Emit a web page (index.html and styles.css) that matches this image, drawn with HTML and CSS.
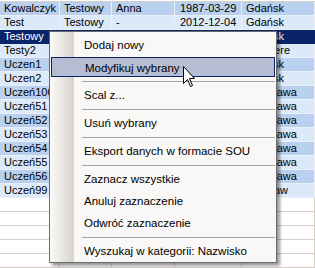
FILE: index.html
```html
<!DOCTYPE html>
<html lang="pl">
<head>
  <meta charset="UTF-8">
  <title>Lista osób</title>
  <link rel="stylesheet" href="styles.css">
</head>
<body>
  <div class="grid">
    <div class="row dark"><span>Kowalczyk</span><span>Testowy</span><span>Anna</span><span>1987-03-29</span><span>Gdańsk</span></div>
    <div class="row light"><span>Test</span><span>Testowy</span><span>-</span><span>2012-12-04</span><span>Gdańsk</span></div>
    <div class="row selected"><span>Testowy</span><span></span><span></span><span></span><span>Gdańsk</span></div>
    <div class="row light"><span>Testy2</span><span></span><span></span><span></span><span>Nowhere</span></div>
    <div class="row dark"><span>Uczen1</span><span></span><span></span><span></span><span>Gdańsk</span></div>
    <div class="row light"><span>Uczen2</span><span></span><span></span><span></span><span>Gdańsk</span></div>
    <div class="row dark"><span>Uczeń100</span><span></span><span></span><span></span><span>Warszawa</span></div>
    <div class="row light"><span>Uczeń51</span><span></span><span></span><span></span><span>Warszawa</span></div>
    <div class="row dark"><span>Uczeń52</span><span></span><span></span><span></span><span>Warszawa</span></div>
    <div class="row light"><span>Uczeń53</span><span></span><span></span><span></span><span>Warszawa</span></div>
    <div class="row dark"><span>Uczeń54</span><span></span><span></span><span></span><span>Warszawa</span></div>
    <div class="row light"><span>Uczeń55</span><span></span><span></span><span></span><span>Warszawa</span></div>
    <div class="row dark"><span>Uczeń56</span><span></span><span></span><span></span><span>Warszawa</span></div>
    <div class="row light"><span>Uczeń99</span><span></span><span></span><span></span><span>Wrocław</span></div>
    <div class="row"><span></span><span></span><span></span><span></span><span></span></div>
    <div class="row"><span></span><span></span><span></span><span></span><span></span></div>
    <div class="row"><span></span><span></span><span></span><span></span><span></span></div>
    <div class="row"><span></span><span></span><span></span><span></span><span></span></div>
    <div class="row"><span></span><span></span><span></span><span></span><span></span></div>
  </div>

  <ul class="context-menu">
    <li class="menu-item">Dodaj nowy</li>
    <li class="menu-item active">Modyfikuj wybrany</li>
    <li class="menu-sep"></li>
    <li class="menu-item">Scal z...</li>
    <li class="menu-sep"></li>
    <li class="menu-item">Usuń wybrany</li>
    <li class="menu-sep"></li>
    <li class="menu-item">Eksport danych w formacie SOU</li>
    <li class="menu-sep"></li>
    <li class="menu-item">Zaznacz wszystkie</li>
    <li class="menu-item">Anuluj zaznaczenie</li>
    <li class="menu-item">Odwróć zaznaczenie</li>
    <li class="menu-sep"></li>
    <li class="menu-item">Wyszukaj w kategorii: Nazwisko</li>
  </ul>

  <svg class="cursor" width="13" height="22" viewBox="0 0 13 22">
    <path d="M0.5 0.5 L0.5 17.5 L4.5 13.5 L7.5 20.5 L9.5 19.5 L6.5 12.5 L11.5 12.5 Z" fill="#fff" stroke="#000" stroke-width="1"/>
  </svg>
</body>
</html>
```

FILE: styles.css
```css
* {
  margin: 0;
  padding: 0;
  box-sizing: border-box;
}

body {
  font-family: "Liberation Sans", Arial, sans-serif;
  font-size: 11px;
  background: #fff;
  color: #000;
  width: 315px;
  height: 268px;
  overflow: hidden;
  position: relative;
}

/* data grid */
.grid {
  padding-top: 1px;
}

.grid .row:first-child {
  border-top: 1px solid #d4d0c8;
}

.row {
  display: grid;
  grid-template-columns: 60px 52px 63px 67px 1fr;
}

.row span {
  height: 14px;
  line-height: 13px;
  padding-left: 4px;
  border-right: 1px solid #d4d0c8;
  border-bottom: 1px solid #d4d0c8;
  white-space: nowrap;
  overflow: hidden;
}

.row span:nth-child(4) {
  padding-left: 5px;
}

.row.dark span {
  background: #b9d1ee;
  border-color: #eaf0f8;
}

.row.light span {
  background: #dce9f8;
  border-color: #eaf0f8;
}

.row.selected span {
  background: #0a246a;
  color: #fff;
  border-color: #0a246a;
}

/* context menu */
.context-menu {
  position: absolute;
  left: 49px;
  top: 31px;
  width: 228px;
  list-style: none;
  padding-top: 2px;
  font-size: 11.5px;
  border: 1px solid #6a6a6a;
  background: linear-gradient(to right, #fbfaf8 0, #d6d3ca 24px, #f9f8f6 24px);
  box-shadow: 3px 3px 3px rgba(0, 0, 0, 0.4);
}

.menu-item {
  height: 22px;
  line-height: 22px;
  padding-left: 34px;
  white-space: nowrap;
}

.menu-item.active {
  margin: 1px;
  height: 20px;
  line-height: 20px;
  padding-left: 33px;
  background: #b6bdd2;
  border: 1px solid #0a246a;
}

.menu-sep {
  height: 6px;
  margin-left: 32px;
  margin-right: 1px;
  padding-top: 3px;
}

.menu-sep::after {
  content: "";
  display: block;
  height: 1px;
  background: #a6a6a6;
}

.cursor {
  position: absolute;
  left: 183px;
  top: 66px;
}
```
